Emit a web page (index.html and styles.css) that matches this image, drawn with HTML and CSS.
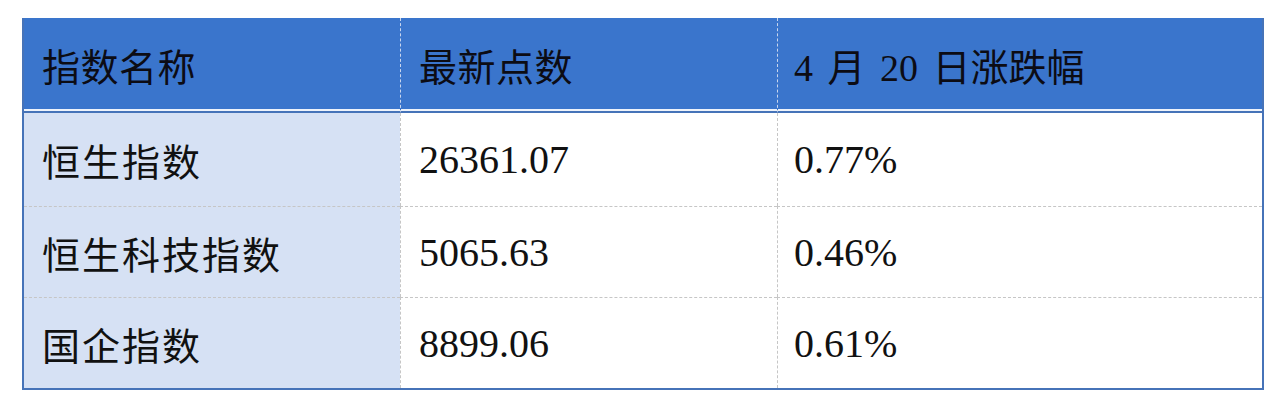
FILE: index.html
```html
<!DOCTYPE html>
<html lang="zh">
<head>
<meta charset="utf-8">
<link rel="stylesheet" href="styles.css">
</head>
<body>
<table class="idx">
  <colgroup>
    <col class="w1">
    <col class="w2">
    <col class="w3">
  </colgroup>
  <thead>
    <tr>
      <th class="c1">指数名称</th>
      <th class="c2">最新点数</th>
      <th class="c3">4 月 20 日涨跌幅</th>
    </tr>
  </thead>
  <tbody>
    <tr>
      <td class="c1 name">恒生指数</td>
      <td class="c2 num">26361.07</td>
      <td class="c3 num">0.77%</td>
    </tr>
    <tr>
      <td class="c1 name">恒生科技指数</td>
      <td class="c2 num">5065.63</td>
      <td class="c3 num">0.46%</td>
    </tr>
    <tr>
      <td class="c1 name">国企指数</td>
      <td class="c2 num">8899.06</td>
      <td class="c3 num">0.61%</td>
    </tr>
  </tbody>
</table>
</body>
</html>
```
FILE: styles.css
```css
html, body {
  margin: 0;
  padding: 0;
  background: #ffffff;
}
body {
  padding: 18px 0 0 22px;
}
.idx {
  border-collapse: separate;
  border-spacing: 0;
  width: 1242px;
  table-layout: fixed;
  border-left: 2px solid #4673b8;
  border-right: 2px solid #4673b8;
  border-bottom: 2px solid #4673b8;
  color: #111;
}
.w1 { width: 376px; }
.w2 { width: 377px; }
.w3 { width: auto; }
.idx th, .idx td {
  box-sizing: border-box;
}
.idx th {
  background: #3a75cc;
  height: 95px;
  padding: 0;
  text-align: left;
  font-family: "Noto Sans CJK SC", "DejaVu Serif", serif;
  font-weight: 400;
  font-size: 38px;
  letter-spacing: 0.5px;
  color: #0c0c14;
  border-bottom: 2px solid #4673b8;
  box-shadow: inset 0 -2px 0 #eef3fb;
  vertical-align: middle;
}
.idx th.c3 {
  font-family: "Liberation Serif", "Noto Sans CJK SC", serif;
  word-spacing: 5px;
  letter-spacing: 0;
}
.c1 { padding-left: 18px !important; }
.c2 { padding-left: 18px !important; }
.c3 { padding-left: 16px !important; }
.idx th.c2, .idx th.c3 {
  border-left: 1px dashed #c9d6ee;
}
.idx td {
  height: 91px;
  padding: 0;
  vertical-align: middle;
  border-top: 1px dashed #c6c6c6;
}
.idx tbody tr:first-child td {
  border-top: none;
  height: 93px;
}
.idx td.c2, .idx td.c3 {
  border-left: 1px dashed #c6c6c6;
}
.name {
  background: #d6e1f4;
  font-family: "Noto Sans CJK SC", sans-serif;
  font-size: 38px;
  letter-spacing: 2px;
}
.num {
  font-family: "Liberation Serif", "DejaVu Serif", serif;
  font-size: 40px;
}
```
